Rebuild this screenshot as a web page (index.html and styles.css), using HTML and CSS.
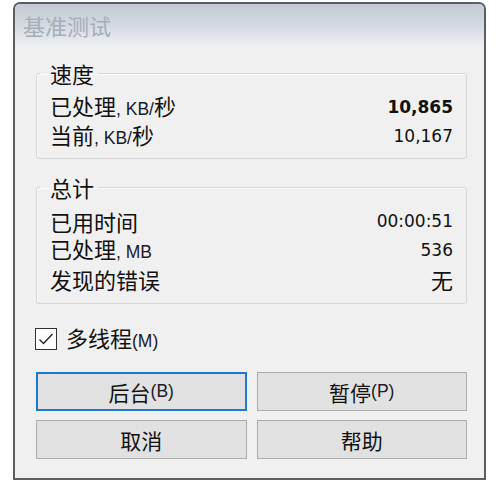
FILE: index.html
```html
<!DOCTYPE html>
<html lang="zh-CN">
<head>
<meta charset="utf-8">
<link rel="stylesheet" href="styles.css">
</head>
<body>
<div class="window">
  <div class="titlebar">基准测试</div>
  <div class="content">
    <fieldset class="group">
      <legend>速度</legend>
      <div class="row"><span>已处理<span class="lat">, KB/</span>秒</span><span class="num bold">10,865</span></div>
      <div class="row"><span>当前<span class="lat">, KB/</span>秒</span><span class="num">10,167</span></div>
    </fieldset>
    <fieldset class="group group2">
      <legend>总计</legend>
      <div class="row"><span>已用时间</span><span class="num">00:00:51</span></div>
      <div class="row"><span>已处理<span class="lat">, MB</span></span><span class="num">536</span></div>
      <div class="row"><span>发现的错误</span><span>无</span></div>
    </fieldset>
    <label class="check">
      <svg class="box" width="22" height="22" viewBox="0 0 22 22">
        <rect x="0.5" y="0.5" width="21" height="21" fill="#fff" stroke="#333"/>
        <polyline points="4.5,11.5 8.5,15.5 17.5,6" fill="none" stroke="#222" stroke-width="1.4"/>
      </svg>
      <span>多线程<span class="lat">(M)</span></span>
    </label>
    <div class="buttons">
      <div class="btn default">后台<span class="lat">(B)</span></div>
      <div class="btn">暂停<span class="lat">(P)</span></div>
      <div class="btn">取消</div>
      <div class="btn">帮助</div>
    </div>
  </div>
</div>
</body>
</html>
```
FILE: styles.css
```css
html, body {
  margin: 0;
  padding: 0;
  background: #ffffff;
}
body {
  font-family: "Noto Sans CJK SC", "Noto Sans", sans-serif;
  font-size: 22px;
  color: #111;
}
.window {
  margin: 2px 0 0 13px;
  width: 473px;
  height: 478px;
  box-sizing: border-box;
  border: 2px solid #5e5e5e;
  border-radius: 7px 7px 0 0;
  background: #f0f0f0;
  overflow: hidden;
}
.titlebar {
  height: 46px;
  box-sizing: border-box;
  padding: 6px 0 0 8px;
  line-height: 30px;
  font-size: 22px;
  color: #a7adb5;
  background: linear-gradient(#c3cad5 0%, #d3d9e1 45%, #eceef1 90%, #f0f0f0 100%);
}
.content {
  padding: 0 17px 0 21px;
}
.group {
  margin: 12px 0 0 0;
  padding: 0 13px 8px 13px;
  border: 1px solid #d6d6d6;
  border-radius: 3px;
  box-shadow: inset 1px 1px 0 #fbfbfb;
}
.group legend {
  padding: 0 4px 0 10px;
  margin-left: -10px;
  line-height: 22px;
  height: 22px;
}
.group2 {
  margin-top: 17px;
  padding-bottom: 10px;
}
.group .row:first-of-type {
  margin-top: 8px;
}
.row {
  display: flex;
  justify-content: space-between;
  align-items: center;
  height: 29px;
  line-height: 29px;
}
.row > span {
  line-height: 24px;
}
.lat {
  font-family: "Liberation Sans", sans-serif;
  font-size: 17.5px;
  color: #1a1a2a;
}
.num {
  font-family: "DejaVu Sans", sans-serif;
  font-size: 17px;
}
.bold {
  font-weight: bold;
}
.check {
  display: flex;
  align-items: center;
  gap: 9px;
  margin-top: 24px;
  margin-left: -1px;
  height: 22px;
  line-height: 22px;
}
.box {
  display: block;
  flex: none;
}
.buttons {
  display: grid;
  grid-template-columns: 1fr 1fr;
  column-gap: 10px;
  row-gap: 9px;
  margin-top: 22px;
}
.btn {
  height: 39px;
  box-sizing: border-box;
  display: flex;
  align-items: center;
  justify-content: center;
  background: #e1e1e1;
  border: 1px solid #adadad;
  font-size: 21px;
}
.btn.default {
  border: 2px solid #1c78d4;
}
```
